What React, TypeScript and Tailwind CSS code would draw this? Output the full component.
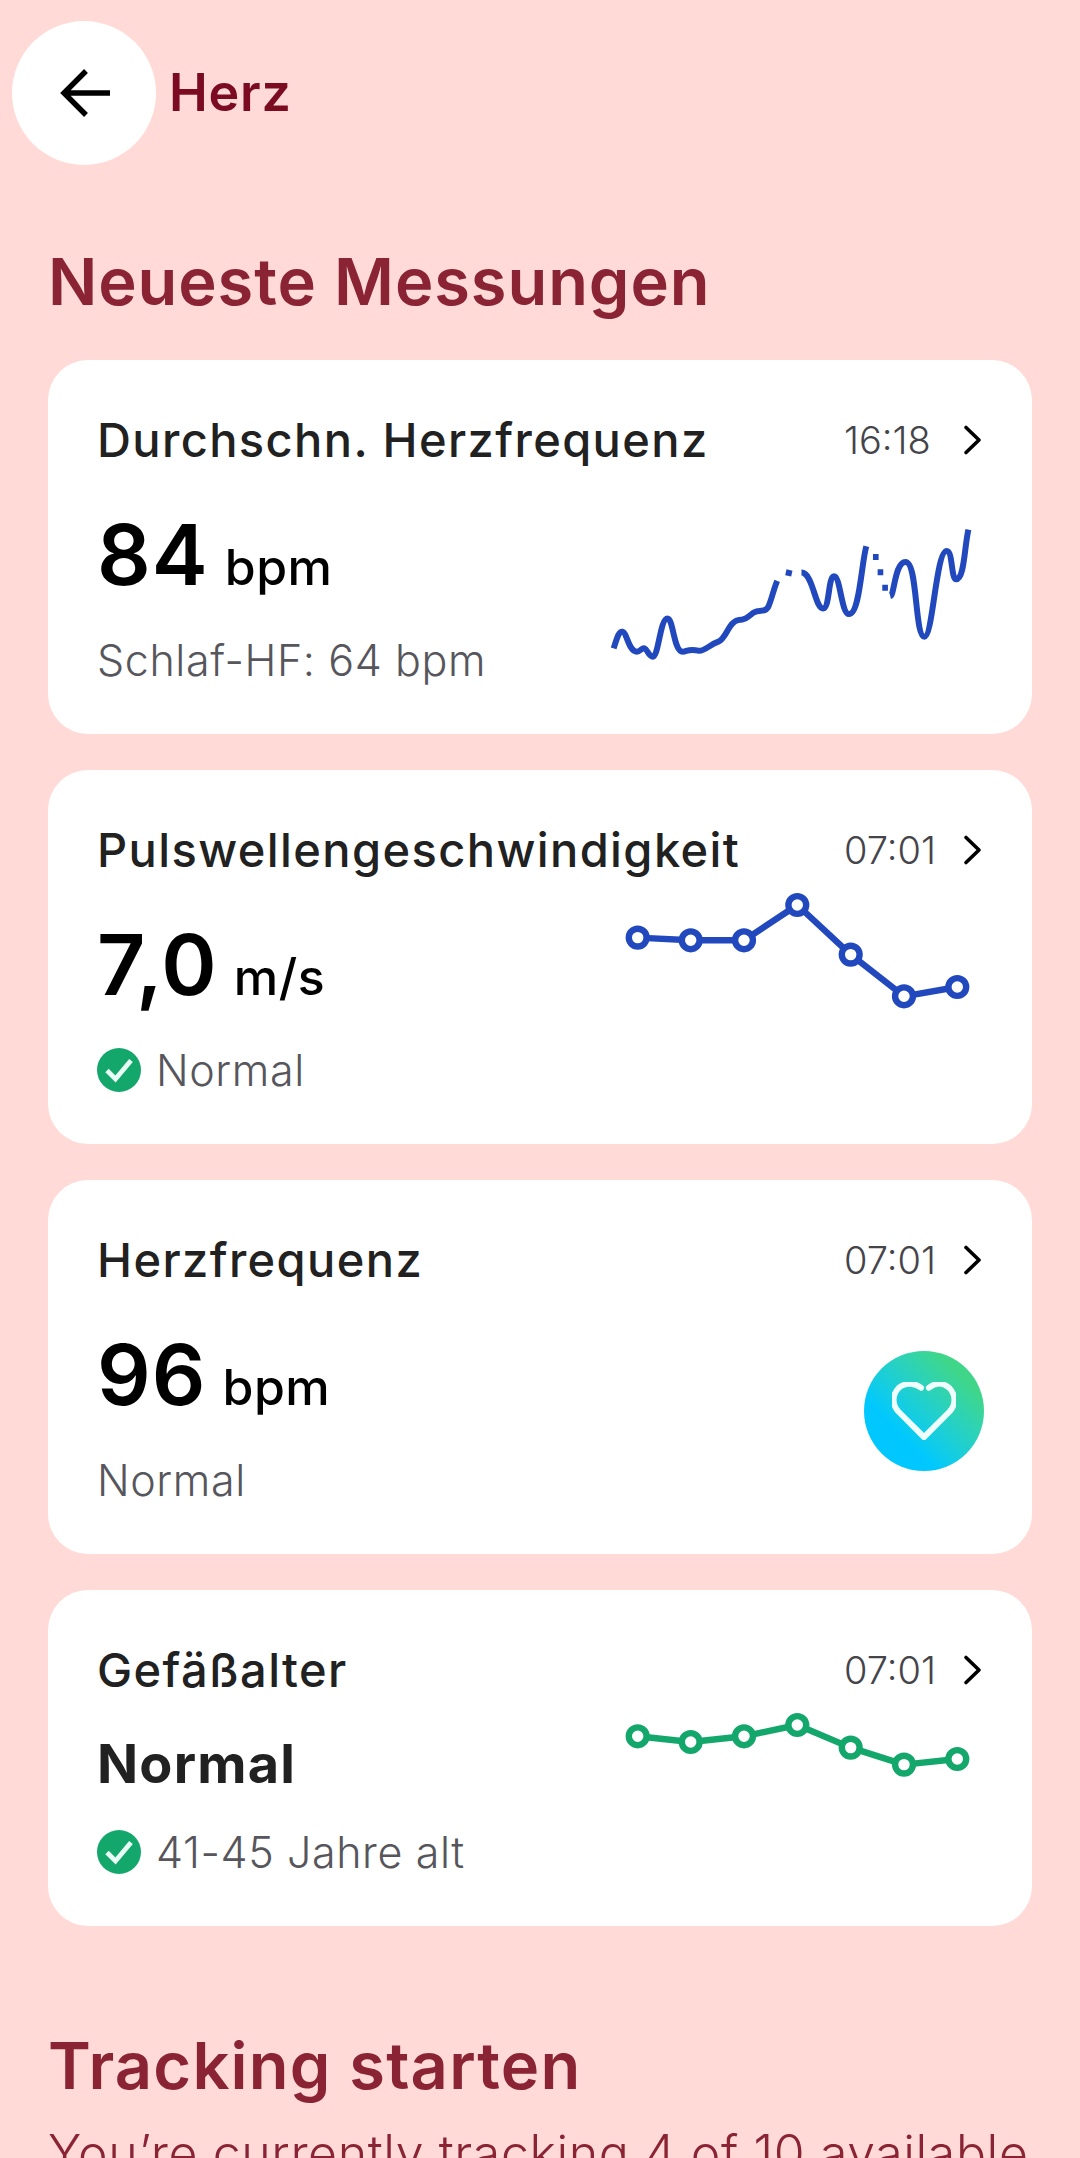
import React from 'react';

const BLUE = '#2149bd';
const GREEN = '#14a76c';
const XS = [637.7, 690.7, 744, 797.3, 850.7, 904, 957.3];

const Chevron = () => (
  <svg width="24" height="32" viewBox="0 0 24 32" fill="none" className="ml-auto">
    <path d="M7 3.5 L20 16 L7 28.5" stroke="#000" strokeWidth="3.6" strokeLinecap="round" strokeLinejoin="round" />
  </svg>
);

const CheckBadge = () => (
  <svg width="44" height="44" viewBox="0 0 44 44" className="shrink-0">
    <circle cx="22" cy="22" r="22" fill={GREEN} />
    <path d="M10 22.5 L18.5 31 L34 12.5" fill="none" stroke="#e8fff5" strokeWidth="4.8" />
  </svg>
);

const DotLine = ({ ys, color }: { ys: number[]; color: string }) => {
  const top = Math.min(...ys) - 14;
  const points = XS.map((x, i) => `${x},${ys[i]}`).join(' ');
  return (
    <svg width="355" height="120" viewBox={`620 ${top} 355 120`} fill="none" className="shrink-0 mt-[1px] mr-[8px]">
      <polyline points={points} stroke={color} strokeWidth="6.4" strokeLinejoin="round" />
      {XS.map((x, i) => (
        <circle key={x} cx={x} cy={ys[i]} r="8.9" fill="#fff" stroke={color} strokeWidth="6.4" />
      ))}
    </svg>
  );
};

const SleepChart = () => (
  <svg width="363" height="133" viewBox="150 380 1090 400" fill="none" className="shrink-0 mt-[47px] mr-[10px]">
    <g stroke={BLUE} strokeWidth="18">
      <path d="M160,745 C170,715 175,693 187,695 C200,697 205,755 230,755 C240,755 245,742 253,745 C262,748 265,770 278,770 C295,770 300,655 322,655 C340,655 340,755 368,755 C380,755 385,745 415,752 C435,755 445,735 475,725 C500,715 505,665 535,660 C555,660 565,650 580,638 C600,625 615,640 625,620 C635,600 640,570 652,542" />
      <path d="M678,516 L696,520" />
      <path d="M725,517 C760,517 765,625 790,625 C810,625 805,528 823,528 C842,528 845,642 868,642 C900,642 905,490 920,438" />
      <path d="M940,470 L957,470 M954,516 L971,516 M968,563 L985,563" />
      <path d="M992,588 C1005,585 1005,485 1038,485 C1075,485 1065,710 1095,710 C1120,710 1130,450 1162,452 C1180,452 1175,537 1190,537 C1215,537 1215,440 1227,388" />
    </g>
  </svg>
);

const HeartBadge = () => (
  <div className="flex items-center justify-center w-[120px] h-[120px] mt-[51px] mr-[-1px] rounded-full shrink-0 bg-linear-to-tr from-[#00c8ff] from-30% to-[#3fd68a] to-80%">
    <svg width="64" height="58" viewBox="0 0 66 60" fill="none">
      <path d="M30 6 C24 1 14 0 7 6 C0 13 0 23 6 30 L33 57 L60 30 C66 23 66 13 59 6 C52 0 44 1 38 6" stroke="#effffb" strokeWidth="6" strokeLinecap="round" strokeLinejoin="round" />
    </svg>
  </div>
);

interface CardProps {
  title: string;
  time: string;
  height: string;
  children: React.ReactNode;
}

const Card = ({ title, time, height, children }: CardProps) => (
  <div className={`bg-white rounded-[40px] px-[49px] pt-[40px] ${height}`}>
    <div className="relative flex items-center h-[80px]">
      <span className="text-[47px] font-medium text-[#212121] tracking-[1.4px] whitespace-nowrap">{title}</span>
      <span className="absolute left-[747px] top-[20px] text-[38px] font-light text-[#44444a] leading-[40px]">{time}</span>
      <Chevron />
    </div>
    <div className="flex justify-between items-start">{children}</div>
  </div>
);

const Value = ({ num, unit }: { num: string; unit: string }) => (
  <div className="flex items-baseline gap-[16px] h-[70px] mt-[40px] leading-[70px] text-black">
    <span className="text-[84px] font-semibold tracking-[1px]">{num}</span>
    <span className="text-[50px] font-medium tracking-[0.5px]">{unit}</span>
  </div>
);

const Sub = ({ text, check, gap = 'mt-[45px]' }: { text: string; check?: boolean; gap?: string }) => (
  <div className={`flex items-center gap-[15px] h-[50px] ${gap} text-[43px] font-light text-[#56565c] tracking-[0.6px] whitespace-nowrap`}>
    {check && <CheckBadge />}
    {text}
  </div>
);

const App: React.FC = () => {
  return (
    <div className="w-[1080px] h-[2158px] overflow-hidden bg-[#ffdad6] font-['Inter',sans-serif]">
      <div className="flex items-center gap-[13px] pt-[21px] pl-[12px]">
        <div className="flex items-center justify-center w-[144px] h-[144px] rounded-full bg-white">
          <svg width="52" height="52" viewBox="0 0 52 52" fill="none" className="ml-[3px]">
            <path d="M50 26 H4 M26 4 L4 26 L26 48" stroke="#000" strokeWidth="5.4" strokeLinejoin="miter" />
          </svg>
        </div>
        <span className="text-[52px] font-semibold text-[#7b0b20] leading-[60px] tracking-[0.8px]">Herz</span>
      </div>

      <h2 className="px-[48px] mt-[72px] mb-[33px] h-[90px] text-[65px] font-semibold text-[#8a2435] leading-[90px] tracking-[0.9px]">Neueste Messungen</h2>

      <div className="flex flex-col gap-[36px] px-[48px]">
        <Card title="Durchschn. Herzfrequenz" time="16:18" height="h-[374px]">
          <div>
            <Value num="84" unit="bpm" />
            <Sub text="Schlaf-HF: 64 bpm" />
          </div>
          <SleepChart />
        </Card>
        <Card title="Pulswellengeschwindigkeit" time="07:01" height="h-[374px]">
          <div>
            <Value num="7,0" unit="m/s" />
            <Sub text="Normal" check />
          </div>
          <DotLine ys={[937.3, 940, 940, 904.7, 954.3, 996, 986.7]} color={BLUE} />
        </Card>
        <Card title="Herzfrequenz" time="07:01" height="h-[374px]">
          <div>
            <Value num="96" unit="bpm" />
            <Sub text="Normal" />
          </div>
          <HeartBadge />
        </Card>
        <Card title="Gefäßalter" time="07:01" height="h-[336px]">
          <div>
            <div className="h-[60px] mt-[24px] text-[54px] font-bold text-[#212121] leading-[60px] tracking-[1.2px]">Normal</div>
            <Sub text="41-45 Jahre alt" check gap="mt-[33px]" />
          </div>
          <DotLine ys={[1736, 1741.7, 1736, 1724.7, 1747.3, 1764.3, 1758.7]} color={GREEN} />
        </Card>
      </div>

      <h2 className="px-[48px] mt-[100px] h-[80px] text-[65px] font-semibold text-[#8a2435] leading-[80px] tracking-[1.2px]">Tracking starten</h2>
      <p className="px-[48px] mt-[17px] text-[50px] font-light text-[#8a2435] leading-[60px] tracking-[0.6px] whitespace-nowrap">You’re currently tracking 4 of 10 available</p>
    </div>
  );
};

export default App;
